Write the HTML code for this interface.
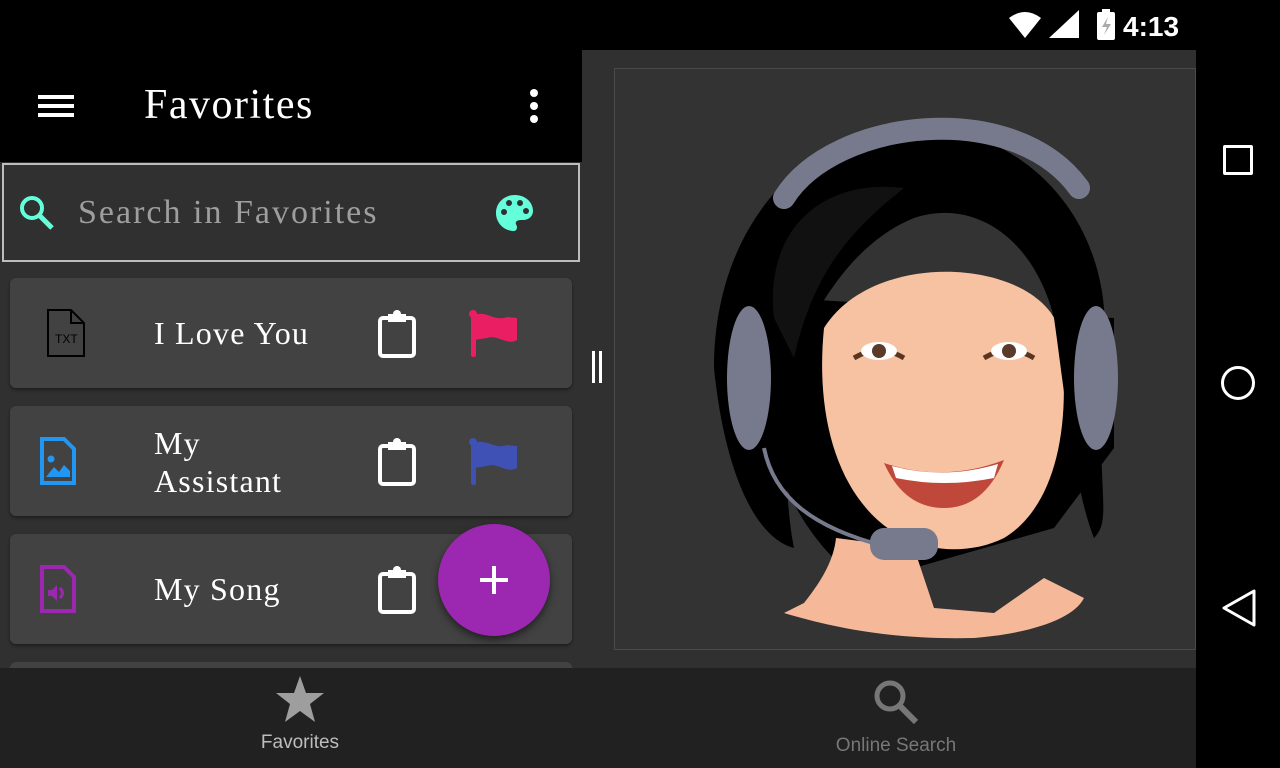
<!DOCTYPE html>
<html><head><meta charset="utf-8"><style>
*{margin:0;padding:0;box-sizing:border-box}
body{width:1280px;height:768px;overflow:hidden;background:#000;position:relative;font-family:"Liberation Serif",serif}
.abs{position:absolute}
.card{position:absolute;left:10px;width:562px;height:110px;background:#424242;border-radius:6px;box-shadow:0 2px 3px rgba(0,0,0,.4)}
.t{position:absolute;left:144px;color:#fff;font-size:32px;line-height:38px;letter-spacing:1.2px}
</style></head><body>
<div class="abs" style="left:0;top:0;width:1280px;height:50px;background:#000"></div>
<svg class="abs" style="left:1005px;top:8px" width="185" height="34">
<path d="M4 10 Q20 -2 36 10 L20 30 Z" fill="#fff"/>
<path d="M44 30 L74 2 L74 30 Z" fill="#fff"/>
<rect x="92" y="4" width="18" height="28" rx="2" fill="#fff"/><rect x="97" y="1" width="8" height="4" fill="#fff"/>
<path d="M103 9 L97 19 L102 19 L99 27 L106 16 L101 16 Z" fill="#aaa"/>
<text x="118" y="28" fill="#fff" font-family="Liberation Sans" font-weight="bold" font-size="28">4:13</text>
</svg>
<div class="abs" style="left:0;top:50px;width:582px;height:618px;background:#303030"></div>
<div class="abs" style="left:0;top:50px;width:582px;height:112px;background:#000"></div>
<div class="abs" style="left:38px;top:95px;width:36px;height:4px;background:#fff;box-shadow:0 9px 0 #fff,0 18px 0 #fff"></div>
<div class="abs" style="left:144px;top:80px;color:#fff;font-size:42px;line-height:50px;letter-spacing:1.5px">Favorites</div>
<div class="abs" style="left:530px;top:89px;width:8px;height:8px;border-radius:50%;background:#fff;box-shadow:0 13px 0 #fff,0 26px 0 #fff"></div>
<div class="abs" style="left:2px;top:163px;width:578px;height:99px;border:2px solid #bdbdbd;background:#303030"></div>
<svg class="abs" style="left:18px;top:194px" width="40" height="40"><circle cx="14" cy="14" r="10" stroke="#64ffda" stroke-width="4" fill="none"/><path d="M21 21 L34 34" stroke="#64ffda" stroke-width="5"/></svg>
<div class="abs" style="left:78px;top:192px;color:#9e9e9e;font-size:34px;line-height:42px;letter-spacing:2px">Search in Favorites</div>
<svg class="abs" style="left:495px;top:193px" width="40" height="40"><path d="M20 2 C9 2 1 10 1 20 C1 30 9 38 19 38 C21 38 22 36 22 34 C22 32 20 31 21 29 C22 27 25 27 28 27 C34 27 38 23 38 18 C38 9 30 2 20 2Z" fill="#64ffda"/><circle cx="9" cy="19" r="3" fill="#303030"/><circle cx="14" cy="10" r="3" fill="#303030"/><circle cx="25" cy="10" r="3" fill="#303030"/><circle cx="31" cy="18" r="3" fill="#303030"/></svg>
<div class="card" style="top:278px"></div>
<div class="card" style="top:406px"></div>
<div class="card" style="top:534px"></div>
<div class="card" style="top:662px;height:6px;border-radius:6px 6px 0 0;box-shadow:none"></div>
<svg class="abs" style="left:46px;top:308px" width="40" height="50"><path d="M2 2 H25 L38 15 V48 H2 Z M25 2 V15 H38" stroke="#000" stroke-width="2" fill="none"/><text x="9" y="35" font-family="Liberation Sans" font-size="12" fill="#000">TXT</text></svg>
<div class="t" style="left:154px;top:314px">I Love You</div>
<svg class="abs" style="left:378px;top:310px" width="40" height="48"><rect x="2" y="8" width="34" height="38" rx="3" stroke="#fff" stroke-width="4" fill="none"/><rect x="10" y="4" width="18" height="8" fill="#fff"/><circle cx="19" cy="4" r="4" fill="#fff"/></svg>
<svg class="abs" style="left:469px;top:310px" width="50" height="50"><rect x="2" y="3" width="5" height="44" rx="2" fill="#e91e63"/><circle cx="4" cy="4" r="4" fill="#e91e63"/><path d="M5 5 C18 0 25 12 38 7 L48 8 V30 C38 36 28 24 18 28 L5 30Z" fill="#e91e63"/></svg>
<svg class="abs" style="left:40px;top:437px" width="40" height="50"><path d="M2 2 H24 L34 12 V46 H2 Z" stroke="#2196f3" stroke-width="4" fill="none"/><circle cx="11" cy="22" r="3.5" fill="#2196f3"/><path d="M6 40 L14 30 L19 35 L24 28 L30 34 V40Z" fill="#2196f3"/></svg>
<div class="t" style="left:154px;top:424px">My<br>Assistant</div>
<svg class="abs" style="left:378px;top:438px" width="40" height="48"><rect x="2" y="8" width="34" height="38" rx="3" stroke="#fff" stroke-width="4" fill="none"/><rect x="10" y="4" width="18" height="8" fill="#fff"/><circle cx="19" cy="4" r="4" fill="#fff"/></svg>
<svg class="abs" style="left:469px;top:438px" width="50" height="50"><rect x="2" y="3" width="5" height="44" rx="2" fill="#3f51b5"/><circle cx="4" cy="4" r="4" fill="#3f51b5"/><path d="M5 5 C18 0 25 12 38 7 L48 8 V30 C38 36 28 24 18 28 L5 30Z" fill="#3f51b5"/></svg>
<svg class="abs" style="left:40px;top:565px" width="40" height="50"><path d="M2 2 H24 L34 12 V46 H2 Z" stroke="#9c27b0" stroke-width="4" fill="none"/><path d="M8 25 H12 L17 20 V36 L12 31 H8Z" fill="#9c27b0"/><path d="M20 23 Q25 28 20 33" stroke="#9c27b0" stroke-width="3" fill="none"/></svg>
<div class="t" style="left:154px;top:570px">My Song</div>
<svg class="abs" style="left:378px;top:566px" width="40" height="48"><rect x="2" y="8" width="34" height="38" rx="3" stroke="#fff" stroke-width="4" fill="none"/><rect x="10" y="4" width="18" height="8" fill="#fff"/><circle cx="19" cy="4" r="4" fill="#fff"/></svg>
<div class="abs" style="left:438px;top:524px;width:112px;height:112px;border-radius:50%;background:#9c27b0;box-shadow:0 4px 8px rgba(0,0,0,.5)"></div>
<div class="abs" style="left:480px;top:578px;width:28px;height:4px;background:#fff"></div>
<div class="abs" style="left:492px;top:566px;width:4px;height:28px;background:#fff"></div>
<div class="abs" style="left:582px;top:50px;width:614px;height:618px;background:#303030"></div>
<div class="abs" style="left:614px;top:68px;width:582px;height:582px;background:#333;border:1px solid #4a4a4a"></div>
<div class="abs" style="left:592px;top:351px;width:3px;height:32px;background:#fff;box-shadow:7px 0 0 #fff"></div>
<svg class="abs" style="left:614px;top:68px" width="582" height="582">
<path d="M170 230 C130 300 150 430 230 500 L300 500 L440 460 L500 380 L500 250 Z" fill="#000"/>
<path d="M190 535 C210 510 220 490 222 470 L300 480 L320 540 L380 545 L430 510 L470 530 C460 550 420 565 360 570 C280 572 220 560 170 545Z" fill="#f5b99a"/>
<path d="M210 260 C200 360 230 440 290 470 C320 485 360 485 390 470 C440 440 460 360 445 260 C420 190 260 180 210 260Z" fill="#f6c2a2"/>
<path d="M100 300 C100 150 200 50 320 60 C420 70 500 160 490 280 C480 420 500 450 480 470 C460 420 450 320 440 250 C420 170 360 130 300 150 C250 170 210 220 180 290 C170 350 170 430 180 480 C140 470 110 400 100 300Z" fill="#000"/>
<path d="M160 250 C150 160 210 110 290 120 C240 160 200 200 180 290Z" fill="#111"/>
<path d="M240 290 Q265 275 290 290" stroke="#5a3520" stroke-width="5" fill="none"/>
<path d="M370 290 Q395 275 420 290" stroke="#5a3520" stroke-width="5" fill="none"/>
<ellipse cx="265" cy="283" rx="18" ry="9" fill="#fff"/><circle cx="265" cy="283" r="7" fill="#5a3a28"/>
<ellipse cx="395" cy="283" rx="18" ry="9" fill="#fff"/><circle cx="395" cy="283" r="7" fill="#5a3a28"/>
<path d="M270 395 Q330 415 390 392 Q370 440 330 440 Q290 440 270 395Z" fill="#c0483a"/>
<path d="M278 398 Q330 412 384 396 L380 410 Q330 420 282 410Z" fill="#fff"/>
<path d="M170 130 C220 50 400 30 465 120" stroke="#777a8c" stroke-width="22" fill="none" stroke-linecap="round"/>
<ellipse cx="135" cy="310" rx="22" ry="72" fill="#777a8c"/>
<ellipse cx="482" cy="310" rx="22" ry="72" fill="#777a8c"/>
<path d="M150 380 C160 430 200 460 270 478" stroke="#777a8c" stroke-width="4" fill="none"/>
<rect x="256" y="460" width="68" height="32" rx="14" fill="#777a8c"/>
</svg>
<div class="abs" style="left:1196px;top:0;width:84px;height:768px;background:#000"></div>
<div class="abs" style="left:1223px;top:145px;width:30px;height:30px;border:3px solid #fff;border-radius:2px"></div>
<div class="abs" style="left:1221px;top:366px;width:34px;height:34px;border:3px solid #fff;border-radius:50%"></div>
<svg class="abs" style="left:1220px;top:588px" width="40" height="40"><path d="M34 3 L4 20 L34 37Z" stroke="#fff" stroke-width="3" fill="none" stroke-linejoin="round"/></svg>
<div class="abs" style="left:0;top:668px;width:1196px;height:100px;background:#212121"></div>
<svg class="abs" style="left:274px;top:674px" width="52" height="52"><path d="M26 2 L32 19 L50 19 L36 30 L41 48 L26 37 L11 48 L16 30 L2 19 L20 19Z" fill="#9e9e9e"/></svg>
<div class="abs" style="left:200px;top:732px;width:200px;text-align:center;color:#bdbdbd;font-family:'Liberation Sans',sans-serif;font-size:19px">Favorites</div>
<svg class="abs" style="left:872px;top:678px" width="48" height="48"><circle cx="18" cy="18" r="13" stroke="#777" stroke-width="5" fill="none"/><path d="M27 27 L44 44" stroke="#777" stroke-width="6"/></svg>
<div class="abs" style="left:796px;top:735px;width:200px;text-align:center;color:#777;font-family:'Liberation Sans',sans-serif;font-size:19px">Online Search</div>
</body></html>
